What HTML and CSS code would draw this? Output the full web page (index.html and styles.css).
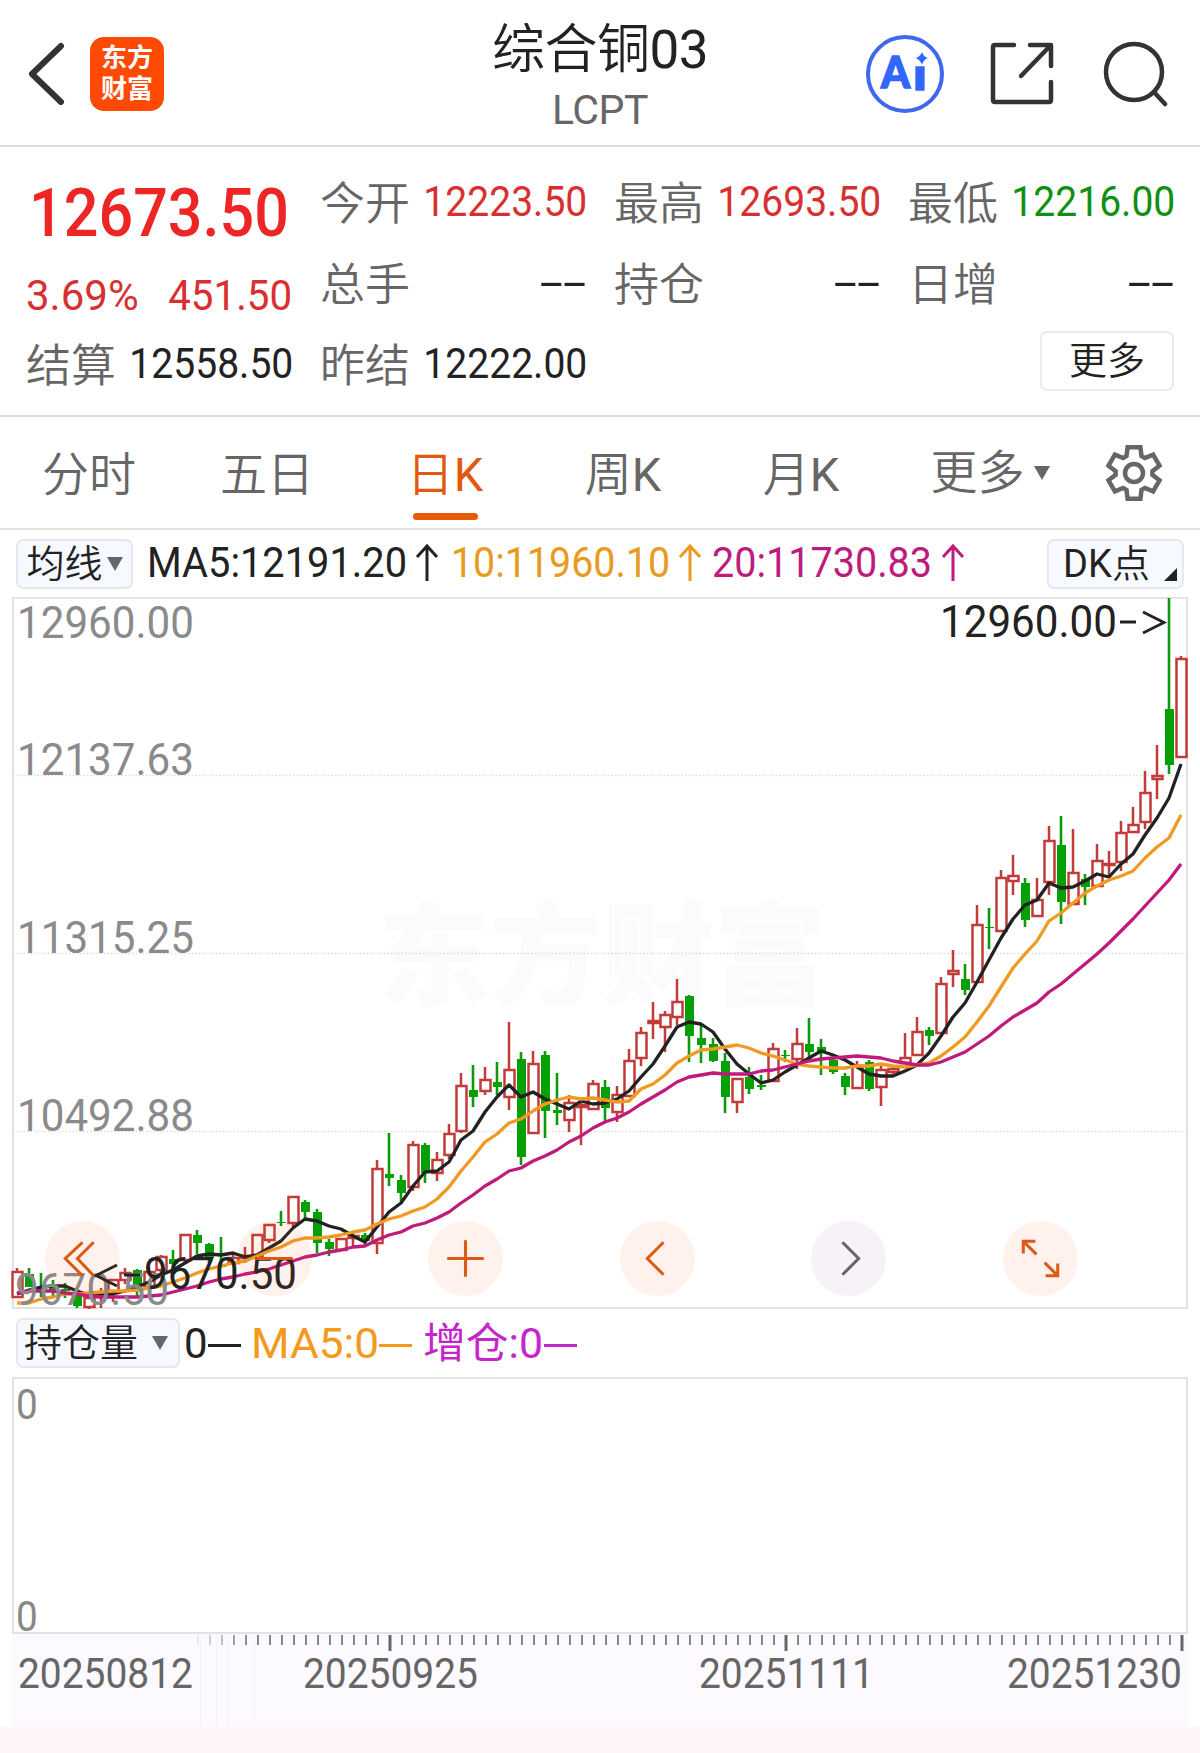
FILE: index.html
```
<!DOCTYPE html>
<html lang="zh-CN">
<head>
  <meta charset="UTF-8">
  <meta name="viewport" content="width=device-width, initial-scale=1.0">
  <title>综合铜03 LCPT</title>
  <link rel="stylesheet" href="styles.css">
</head>
<body>

<header class="header">
  <div class="header-left">
    <svg class="back" width="40" height="64" viewBox="0 0 40 64"><path d="M35 4 L6 32 L35 60"/></svg>
    <div class="logo"><span>东方</span><span>财富</span></div>
  </div>
  <div class="title">
    <h1>综合铜<span class="en">03</span></h1>
    <p>LCPT</p>
  </div>
  <div class="header-right">
    <svg width="80" height="80" viewBox="0 0 80 80">
      <circle cx="40" cy="40" r="37" fill="none" stroke="#3e69ee" stroke-width="4"/>
      <text class="ai" x="16" y="54" textLength="29" lengthAdjust="spacingAndGlyphs">A</text>
      <text class="ai" x="48" y="56" textLength="14" lengthAdjust="spacingAndGlyphs">ı</text>
      <path d="M57 18 Q58.500 23 63 24 Q58.500 25.500 57 31 Q55 25.500 50.500 24 Q55 23 57 18Z" fill="#3366ff"/>
    </svg>
    <svg class="icon share" width="66" height="66" viewBox="0 0 66 66">
      <path d="M25 4 H6 Q4 4 4 6 V59 Q4 61 6 61 H60 Q62 61 62 59 V41"/>
      <path d="M41 4 H62 V25 M61 5 L32 35"/>
    </svg>
    <svg class="icon" width="66" height="66" viewBox="0 0 66 66">
      <circle cx="31" cy="31" r="28"/><path d="M51 51 L62 63"/>
    </svg>
  </div>
</header>

<section class="quote">
  <div class="col main">
    <div class="price">12673.50</div>
    <div class="change"><span>3.69%</span><span>451.50</span></div>
    <div class="item"><label>结算</label><b>12558.50</b></div>
  </div>
  <div class="col">
    <div class="item"><label>今开</label><b class="up">12223.50</b></div>
    <div class="item"><label>总手</label><b class="none">--</b></div>
    <div class="item"><label>昨结</label><b>12222.00</b></div>
  </div>
  <div class="col">
    <div class="item"><label>最高</label><b class="up">12693.50</b></div>
    <div class="item"><label>持仓</label><b class="none">--</b></div>
  </div>
  <div class="col">
    <div class="item"><label>最低</label><b class="down">12216.00</b></div>
    <div class="item"><label>日增</label><b class="none">--</b></div>
    <button class="more">更多</button>
  </div>
</section>

<nav class="tabs">
  <a>分时</a>
  <a>五日</a>
  <a class="active"><span>日<span class="en">K</span></span></a>
  <a>周<span class="en">K</span></a>
  <a>月<span class="en">K</span></a>
  <a class="tab-more">更多<i class="tri"></i></a>
  <svg width="60" height="60" viewBox="-30 -30 60 60">
    <path id="gear" fill="none" stroke="#666" stroke-width="4.500"/>
    <circle r="9" fill="none" stroke="#666" stroke-width="4.500"/>
  </svg>
</nav>

<div class="ma">
  <span class="pill"><em>均线</em><i class="tri"></i></span>
  <svg class="legend" width="900" height="66">
    <text x="14" y="46" textLength="260" lengthAdjust="spacingAndGlyphs" fill="#222">MA5:12191.20</text>
    <text x="318" y="46" textLength="219" lengthAdjust="spacingAndGlyphs" fill="#e99a20">10:11960.10</text>
    <text x="579" y="46" textLength="220" lengthAdjust="spacingAndGlyphs" fill="#bd1b7e">20:11730.83</text>
    <path d="M294 50 V16 M284 26 L294 15 L304 26" stroke="#222"/>
    <path d="M557 50 V16 M547 26 L557 15 L567 26" stroke="#e99a20"/>
    <path d="M820 50 V16 M810 26 L820 15 L830 26" stroke="#bd1b7e"/>
  </svg>
  <span class="pill dk"><em><span class="en">DK</span>点</em><i class="corner"></i></span>
</div>

<div class="chart">
  <svg id="kline" width="1200" height="712" viewBox="0 597 1200 712">
    <text class="watermark" x="378" y="997" textLength="448">东方财富</text>
    <g class="grid">
      <path d="M13 775.500 H1187 M13 953.500 H1187 M13 1131.500 H1187"/>
    </g>
    <rect class="frame" x="13" y="598" width="1174" height="710"/>
    <g id="candles"></g>
    <g id="lines"></g>
    <g class="scale">
      <text x="17" y="638" textLength="177" lengthAdjust="spacingAndGlyphs">12960.00</text>
      <text x="17" y="775" textLength="177" lengthAdjust="spacingAndGlyphs">12137.63</text>
      <text x="17" y="953" textLength="177" lengthAdjust="spacingAndGlyphs">11315.25</text>
      <text x="17" y="1131" textLength="177" lengthAdjust="spacingAndGlyphs">10492.88</text>
      <text x="15" y="1305" textLength="154" lengthAdjust="spacingAndGlyphs">9670.50</text>
    </g>
    <g class="mark">
      <text x="940" y="637" textLength="177" lengthAdjust="spacingAndGlyphs">12960.00</text>
      <text x="144" y="1289" textLength="153" lengthAdjust="spacingAndGlyphs">9670.50</text>
      <path d="M1120 622 H1136 M1143 612 L1164 622.500 L1143 633"/>
      <path d="M124 1275 H140 M117 1265 L96 1275.500 L117 1286"/>
    </g>
  </svg>
  <div class="tools">
    <button><svg viewBox="-37 -37 74 74"><path d="M0 -16 L-17 0 L0 17 M11 -16 L-5 0 L11 17"/></svg></button>
    <button><svg viewBox="-37 -37 74 74"><path d="M-18 0 H18"/></svg></button>
    <button><svg viewBox="-37 -37 74 74"><path d="M-18 0 H18 M0 -18 V18"/></svg></button>
    <button><svg viewBox="-37 -37 74 74"><path d="M6 -16 L-10 0 L6 16"/></svg></button>
    <button class="off"><svg viewBox="-37 -37 74 74"><path d="M-6 -16 L10 0 L-6 16"/></svg></button>
    <button><svg viewBox="-37 -37 74 74"><path d="M-17 -5 V-17 H-5 M-17 -17 L-4 -4 M17 5 V17 H5 M17 17 L4 4"/></svg></button>
  </div>
</div>

<div class="vol-head">
  <span class="pill vol-pill"><em>持仓量</em><i class="tri"></i></span>
  <svg class="legend" width="420" height="66">
    <text x="4" y="48" fill="#222">0</text>
    <text x="71" y="48" textLength="128" lengthAdjust="spacingAndGlyphs" fill="#f39a1c">MA5:0</text>
    <text x="243" y="48" textLength="120" lengthAdjust="spacingAndGlyphs" fill="#c526cc">增仓:0</text>
    <path d="M28 35.500 H61" stroke="#222"/>
    <path d="M199 35.500 H232" stroke="#f39a1c"/>
    <path d="M364 35.500 H397" stroke="#c526cc"/>
  </svg>
</div>

<div class="volume"><span>0</span><span>0</span></div>

<div class="axis">
  <svg width="1176" height="93" viewBox="12 1634 1176 93">
    <path d="M200.500 1634 V1727 M216.500 1634 V1727 M227.500 1634 V1727 M254.500 1634 V1727" stroke="#f4f4fb"/>
    <g id="ticks"></g>
    <text x="18" y="1688" textLength="175" lengthAdjust="spacingAndGlyphs">20250812</text>
    <text x="303" y="1688" textLength="175" lengthAdjust="spacingAndGlyphs">20250925</text>
    <text x="699" y="1688" textLength="175" lengthAdjust="spacingAndGlyphs">20251111</text>
    <text x="1007" y="1688" textLength="175" lengthAdjust="spacingAndGlyphs">20251230</text>
  </svg>
</div>

<footer class="bottom"></footer>

<script>
// u = up, d = down, then high, body top, body bottom, low
const candles = `u 1268 1272 1297 1297|d 1268 1274 1287 1287|d 1273 1287 1290 1297|d 1280 1288 1290 1296|d 1283 1289 1291 1298|d 1292 1296 1306 1308|u 1293 1298 1307 1309|u 1288 1293 1297 1308|u 1279 1280 1292 1302|u 1268 1273 1280 1284
d 1269 1270 1286 1296|u 1267 1272 1287 1287|u 1255 1257 1270 1278|d 1250 1259 1264 1272|u 1234 1235 1260 1262|d 1230 1235 1243 1254|d 1243 1244 1258 1263|d 1237 1265 1267 1268|u 1253 1258 1263 1265|u 1247 1256 1258 1263
u 1234 1235 1257 1257|u 1224 1225 1240 1243|d 1211 1222 1223 1226|u 1197 1197 1223 1227|d 1200 1202 1212 1218|d 1209 1212 1243 1253|d 1239 1242 1249 1256|u 1239 1239 1250 1251|u 1233 1236 1238 1247|d 1233 1235 1241 1247
u 1160 1169 1243 1254|d 1133 1174 1178 1186|d 1175 1180 1193 1202|u 1141 1145 1187 1191|d 1143 1145 1173 1183|u 1152 1160 1173 1181|u 1124 1134 1155 1159|u 1073 1086 1131 1133|d 1065 1090 1097 1107|u 1067 1080 1091 1095
d 1062 1082 1087 1095|u 1022 1070 1097 1110|d 1052 1059 1157 1165|u 1051 1064 1133 1134|d 1051 1055 1111 1138|d 1073 1110 1113 1125|u 1095 1103 1120 1132|u 1100 1105 1107 1145|u 1080 1084 1109 1110|d 1080 1087 1108 1121
u 1086 1095 1112 1122|u 1049 1061 1096 1097|u 1027 1033 1058 1066|u 1002 1021 1023 1039|u 1011 1015 1027 1052|u 979 1002 1017 1025|d 995 996 1036 1062|d 1025 1038 1045 1063|d 1038 1044 1061 1062|d 1053 1061 1097 1113
u 1079 1079 1102 1113|d 1067 1077 1089 1094|d 1075 1085 1087 1090|u 1043 1049 1081 1081|d 1050 1055 1056 1062|u 1028 1044 1059 1069|d 1018 1044 1052 1057|d 1039 1047 1052 1075|d 1059 1060 1072 1074|d 1073 1076 1087 1095
u 1061 1066 1088 1088|d 1060 1062 1089 1091|u 1065 1070 1087 1106|u 1066 1069 1072 1074|u 1033 1058 1063 1063|u 1017 1032 1055 1055|d 1027 1030 1036 1045|u 977 984 1033 1033|u 950 971 974 987|d 964 979 990 995
u 905 925 982 982|d 908 927 928 949|u 870 878 931 931|u 855 876 881 895|d 878 883 920 927|u 878 900 916 916|u 826 841 882 895|d 816 845 902 924|u 829 873 904 904|d 874 879 887 905
u 844 861 886 886|u 851 864 865 877|u 821 833 862 871|u 807 825 832 832|u 771 793 822 829|u 745 776 779 799|d 598 709 765 774|u 656 659 757 758`
  .split(/[|\n]/).map(row => row.trim().split(' '));

const ma5 = [1294,1290,1287,1286,1286,1291,1295,1295,1294,1291,1287,1282,1275,1270,1263,1256,1254,1255,1253,1257,1255,1248,1241,1228,1219,1221,1226,1229,1236,1242,1227,1212,1203,1186,1172,1171,1162,1140,1131,1112,1097,1085,1097,1092,1099,1104,1109,1101,1104,1103,1099,1091,1077,1064,1046,1027,1022,1024,1032,1049,1064,1074,1083,1080,1072,1065,1058,1051,1055,1060,1067,1074,1076,1076,1071,1065,1053,1036,1017,1003,982,960,938,919,905,900,883,888,887,881,874,877,864,854,835,818,798,764];
const ma10 = [1303,1303,1299,1297,1294,1294,1293,1292,1291,1291,1290,1288,1286,1282,1278,1273,1269,1266,1263,1261,1256,1251,1247,1241,1238,1238,1237,1235,1232,1230,1224,1219,1216,1211,1207,1199,1187,1171,1157,1142,1134,1123,1119,1111,1104,1100,1097,1099,1098,1100,1102,1101,1089,1084,1075,1063,1056,1050,1049,1047,1045,1048,1053,1056,1060,1064,1066,1067,1068,1068,1066,1066,1064,1066,1067,1065,1063,1056,1047,1037,1022,1006,987,968,954,941,921,913,903,893,886,880,876,871,858,847,838,815];
const ma20 = [1293,1291,1291,1291,1293,1294,1296,1297,1297,1297,1297,1296,1295,1292,1289,1286,1282,1279,1277,1274,1272,1269,1265,1261,1257,1255,1252,1250,1247,1246,1240,1235,1232,1226,1223,1218,1212,1203,1195,1186,1179,1171,1168,1161,1156,1150,1142,1136,1128,1122,1118,1112,1104,1097,1090,1082,1077,1075,1073,1074,1074,1074,1071,1070,1067,1064,1061,1059,1058,1057,1056,1057,1058,1061,1063,1065,1065,1062,1057,1052,1044,1036,1026,1017,1010,1003,992,984,974,964,954,943,931,919,906,893,880,864];

const x = i => 17 + i * 12;

let out = '';
candles.forEach(([dir, high, top, bottom, low], i) => {
  const h = Math.max(bottom - top, 1);
  if (dir === 'u') {
    out += `<path class="up" d="M${x(i)} ${high} V${top} M${x(i)} ${bottom} V${low}"/>`;
    out += `<rect class="up" x="${x(i) - 4.5}" y="${top}" width="10" height="${h}"/>`;
  } else {
    out += `<path class="down" d="M${x(i)} ${high} V${low}"/>`;
    out += `<rect class="down" x="${x(i) - 4}" y="${top}" width="9" height="${h}"/>`;
  }
});
document.getElementById('candles').innerHTML = out;

const line = (data, color) => `<polyline points="${data.map((y, i) => x(i) + ',' + y).join(' ')}" stroke="${color}"/>`;
document.getElementById('lines').innerHTML = line(ma5, '#222') + line(ma10, '#f09a22') + line(ma20, '#c01a7c');

let ticks = '';
for (let i = 0; i < 83; i++) {
  const tx = 198 + i * 12;
  const big = tx === 390 || tx === 786 || tx === 1182;
  ticks += `<path d="M${tx} 1635 V${big ? 1651 : 1645}" stroke="${big ? '#666' : '#888'}" stroke-width="${big ? 3 : 2}" opacity="${Math.min(1, 0.15 + i * 0.2)}"/>`;
}
document.getElementById('ticks').innerHTML = ticks;

// six-tooth gear outline
const pts = [];
for (let k = 0; k < 6; k++) {
  [[-24, 18.5], [-14, 26.5], [14, 26.5], [24, 18.5]].forEach(([a, r]) => {
    const t = (k * 60 + a - 90) * Math.PI / 180;
    pts.push((r * Math.cos(t)).toFixed(1) + ' ' + (r * Math.sin(t)).toFixed(1));
  });
}
document.getElementById('gear').setAttribute('d', 'M' + pts.join(' L') + ' Z');
</script>

</body>
</html>
```

FILE: styles.css
```
* { box-sizing: border-box; }
body { margin: 0; width: 1200px; background: #fff; color: #222; font-family: Roboto, "Noto Sans CJK SC", sans-serif; font-weight: 350; }
svg { display: block; }
em { font-style: normal; }
.en { font-weight: 400; }
button { font: inherit; padding: 0; border: none; background: none; }

.header { display: grid; grid-template-columns: 1fr auto 1fr; align-items: center; height: 147px; padding-top: 2px; border-bottom: 2px solid #dedede; }
.header-left { display: flex; align-items: center; gap: 24px; padding-left: 26px; }
.back path { fill: none; stroke: #333; stroke-width: 6; stroke-linecap: round; stroke-linejoin: round; }
.logo { display: flex; flex-direction: column; justify-content: center; width: 74px; height: 74px; border-radius: 14px; background: #ff4a05; color: #fff; font-size: 26px; font-weight: 700; line-height: 31px; text-align: center; }
.title { padding-top: 6px; text-align: center; }
.title h1 { margin: 0; font-size: 53px; font-weight: 350; line-height: 62px; letter-spacing: -0.5px; }
.title p { margin: 4px 0 0; font-size: 41px; font-weight: 400; line-height: 50px; color: #666; letter-spacing: -0.5px; }
.header-right { display: flex; align-items: center; justify-content: flex-end; gap: 46px; padding-right: 31px; }
.ai { font-family: Lato, sans-serif; font-size: 43px; font-weight: 900; fill: #3366ff; stroke: #3366ff; stroke-width: 1.5; }
.icon { fill: none; stroke: #333; stroke-width: 4.5; stroke-linecap: round; stroke-linejoin: round; }
.share { margin: 0 2px 0 -2px; }

.quote { display: grid; grid-template-columns: repeat(4, 266px); column-gap: 28px; height: 270px; padding: 22px 26px 0; border-bottom: 2px solid #dedede; }
.item { display: flex; justify-content: space-between; align-items: center; height: 66px; margin-bottom: 15px; color: #666; font-size: 45px; white-space: nowrap; }
.item label { padding-bottom: 4px; }
.item b { margin: 0 -1px 0 -10px; padding-bottom: 2px; color: #222; font-size: 42px; font-weight: 400; transform: scaleX(0.93); transform-origin: right; }
.item .up { color: #d83030; }
.item .down { color: #109010; }
.item .none { margin-right: 0; transform: scaleX(2); }
.price { height: 88px; line-height: 90px; margin: 0 -20px; text-align: center; font-size: 66px; font-weight: 500; color: #ee2525; transform: scaleX(0.925); }
.change { display: flex; justify-content: space-between; height: 74px; line-height: 77px; font-size: 42px; font-weight: 400; color: #d83030; }
.change span:last-child { transform: scaleX(0.96); transform-origin: right; }
.more { display: block; width: 134px; height: 60px; margin: 1px 0 0 auto; border: 2px solid #ebebeb; border-radius: 7px; font-size: 38px; line-height: 54px; color: #222; }

.tabs { display: grid; grid-template-columns: repeat(5, 178px) 214px 60px; align-items: center; height: 113px; border-bottom: 2px solid #e2e2e4; color: #666; font-size: 47px; }
.tabs a { display: flex; justify-content: center; height: 111px; line-height: 115px; }
.tabs .active { flex-direction: column; align-items: center; justify-content: flex-start; color: #e2580e; }
.tabs .active::after { content: ""; flex: none; width: 65px; height: 7px; margin-top: -19px; border-radius: 4px; background: #e65a08; }
.tabs .tab-more { align-items: center; gap: 9px; padding-right: 14px; }
.tri { display: inline-block; border: 8px solid transparent; border-top: 14px solid #666; border-bottom: none; }

.ma, .vol-head { display: flex; align-items: center; height: 67px; padding: 0 16px; }
.pill { position: relative; flex: none; display: flex; align-items: center; justify-content: center; width: 117px; height: 50px; border: 2px solid #e6e8ee; border-radius: 7px; background: #f6f9ff; font-size: 38px; }
.pill em { padding-bottom: 7px; }
.pill .tri { margin-left: 4px; }
.dk { width: 137px; margin-left: auto; padding-right: 18px; }
.corner { position: absolute; right: 5px; bottom: 6px; border-left: 13px solid transparent; border-bottom: 13px solid #222; }
.legend { flex: none; }
.legend text { font-size: 42px; font-weight: 400; }
.legend path { fill: none; stroke-width: 3; }
.ma .legend { margin-right: -20px; }

.chart { position: relative; height: 712px; }
.frame { fill: none; stroke: #e2e2e2; stroke-width: 2; }
.grid path { stroke: #dcdcdc; stroke-width: 1.5; stroke-dasharray: 1.5 2; }
.watermark { font-size: 112px; font-weight: 900; fill: #fdfafe; }
.scale text { font-size: 44px; fill: #8a8a8a; font-weight: 400; }
.mark text { font-size: 44px; fill: #222; font-weight: 400; }
.mark path { fill: none; stroke: #222; stroke-width: 2.8; }
#candles .up { fill: none; stroke: #c23b38; stroke-width: 2.5; }
#candles rect.up { fill: #fff; }
#candles .down { stroke: #0a9a0a; stroke-width: 2.6; }
#candles rect.down { fill: #05a005; stroke: none; }
#lines polyline { fill: none; stroke-width: 3.3; stroke-linejoin: round; }

.tools { position: absolute; left: 45px; right: 122.5px; top: 624px; display: flex; justify-content: space-between; }
.tools button { width: 75px; height: 75px; border-radius: 50%; background: rgba(255, 90, 30, 0.08); }
.tools path { fill: none; stroke: #dc5a18; stroke-width: 3; }
.tools .off { background: #f6f2f7; }
.tools .off path { stroke: #666; }

.vol-head { height: 68px; }
.vol-pill { width: 164px; padding-right: 4px; }
.vol-pill .tri { margin-left: 14px; }
.volume { display: flex; flex-direction: column; justify-content: space-between; width: 1176px; height: 257px; margin-left: 12px; padding: 4px 2px 0; border: 2px solid #e2e2e2; font-size: 42px; font-weight: 400; line-height: 44px; color: #888; }
.volume span { width: 24px; transform: scaleX(0.92); transform-origin: left; }
.volume span:last-child { margin-bottom: -7px; }
.axis { width: 1176px; height: 93px; margin: 0 12px; background: #fdfaff; }
.axis text { font-size: 42px; font-weight: 400; fill: #666; }
.bottom { height: 27px; background: #fff5f6; }
```
